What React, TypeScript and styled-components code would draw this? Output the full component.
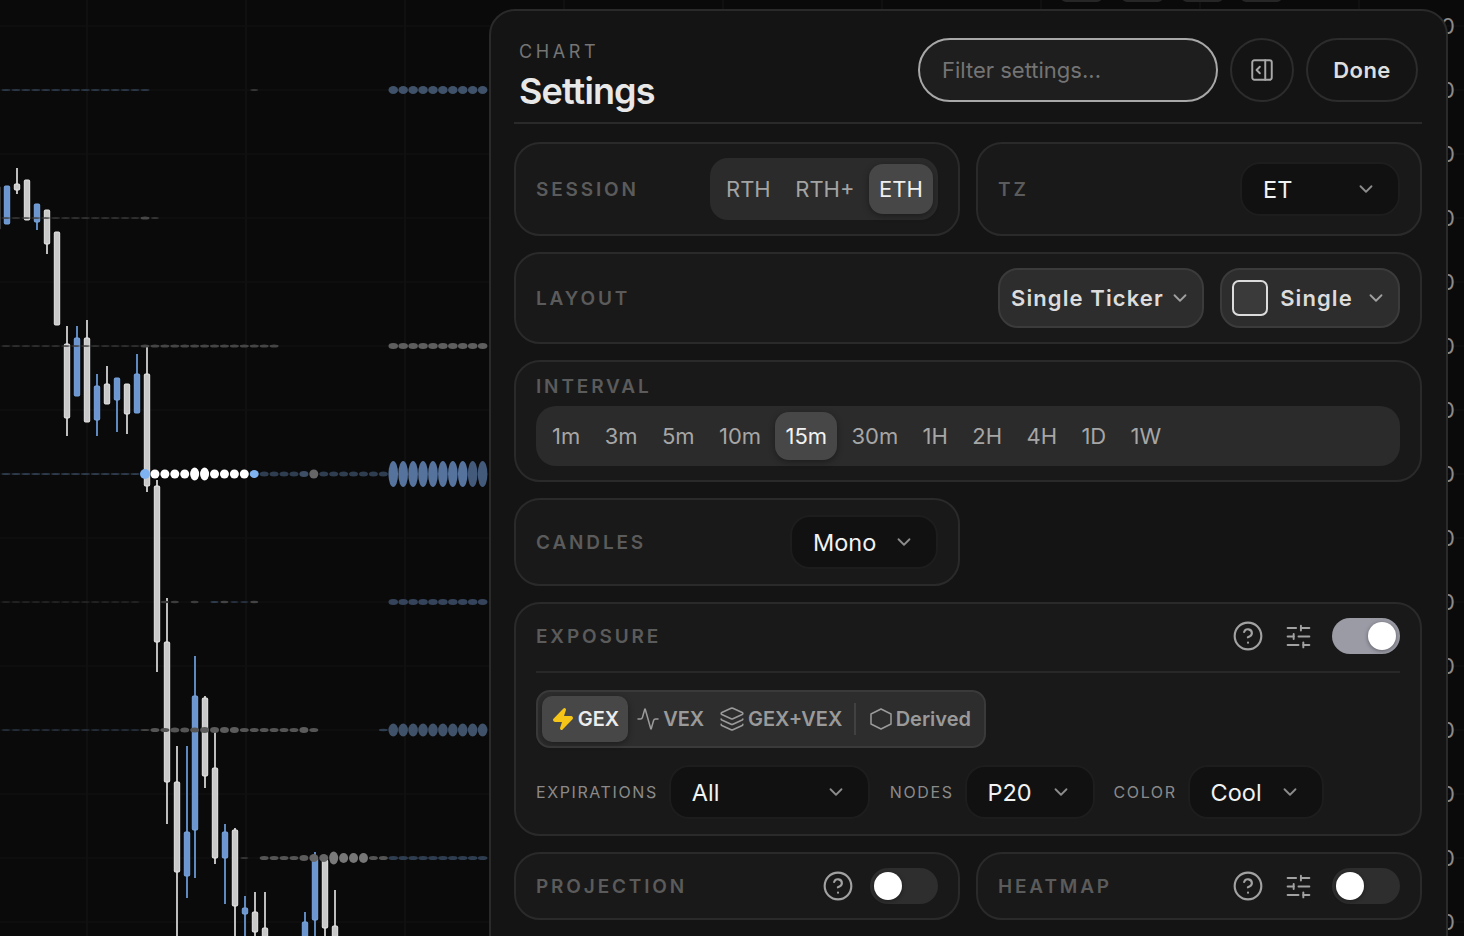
import React from 'react';
import styled, { createGlobalStyle } from 'styled-components';
import { Activity, ChevronDown, CircleHelp, Layers, PanelRightOpen, SlidersHorizontal, Zap } from 'lucide-react';

const GlobalStyle = createGlobalStyle`
  html, body { margin: 0; padding: 0; background: #0a0a0a; }
  body { font-family: Inter, "Noto Sans", "Liberation Sans", sans-serif; -webkit-font-smoothing: antialiased; }
`;

const Page = styled.div`
  position: relative;
  width: 1464px;
  height: 936px;
  overflow: hidden;
  background: #0a0a0a;
`;

const ChartCanvas = styled.svg`
  display: block;
  width: 1464px;
  height: 936px;
`;

const Panel = styled.div`
  position: absolute;
  top: 9px;
  left: 489px;
  width: 959px;
  height: 980px;
  box-sizing: border-box;
  padding: 27px 24px 0 23px;
  display: flex;
  flex-direction: column;
  gap: 16px;
  background: #141414;
  border: 2px solid #2a2a2a;
  border-radius: 26px;
`;

const Header = styled.div`
  display: flex;
  align-items: flex-start;
  padding: 0 4px 20px 5px;
  margin-bottom: 2px;
  border-bottom: 2px solid #2a2a2a;
`;

const TitleBlock = styled.div`
  flex: 1;
  height: 64px;
  display: flex;
  flex-direction: column;
`;

const Eyebrow = styled.div`
  margin-top: 3px;
  font-size: 18px;
  line-height: 22px;
  letter-spacing: 0.2em;
  color: #757575;
`;

const Title = styled.div`
  margin-top: 6px;
  font-size: 36px;
  line-height: 44px;
  font-weight: 600;
  letter-spacing: -0.025em;
  color: #e8e8e8;
`;

const FilterInput = styled.input`
  width: 300px;
  height: 64px;
  box-sizing: border-box;
  padding: 0 22px;
  background: #1e1e1e;
  border: 2px solid #a8a8a8;
  border-radius: 32px;
  outline: none;
  font-family: inherit;
  font-size: 22px;
  color: #ddd;
  &::placeholder { color: #747474; opacity: 1; }
`;

const RoundButton = styled.button`
  height: 64px;
  min-width: 64px;
  margin-left: 12px;
  padding: 0;
  display: flex;
  align-items: center;
  justify-content: center;
  box-sizing: border-box;
  background: transparent;
  border: 2px solid #2c2c2c;
  border-radius: 32px;
  font-family: inherit;
  font-size: 22px;
  font-weight: 600;
  letter-spacing: 0.02em;
  color: #dedede;
`;

const DoneButton = styled(RoundButton)`
  width: 112px;
`;

const TwoColumns = styled.div`
  display: grid;
  grid-template-columns: 446px 446px;
  gap: 16px;
`;

const Card = styled.div`
  box-sizing: border-box;
  background: #191919;
  border: 2px solid #2a2a2a;
  border-radius: 26px;
  padding: 0 20px;
`;

const RowCard = styled(Card)<{ $height: number }>`
  height: ${({ $height }) => $height}px;
  display: flex;
  align-items: center;
  justify-content: space-between;
`;

const CardLabel = styled.div`
  padding-top: 2px;
  font-size: 19px;
  line-height: 24px;
  font-weight: 600;
  letter-spacing: 0.15em;
  color: #5b5b5b;
`;

const Segmented = styled.div`
  display: flex;
  align-items: center;
  gap: 4.5px;
  width: 228px;
  height: 62px;
  box-sizing: border-box;
  padding: 0 5px 0 6px;
  background: #2b2b2b;
  border-radius: 18px;
`;

const SegmentItem = styled.div<{ $active?: boolean }>`
  height: 50px;
  padding: 0 10px;
  display: flex;
  align-items: center;
  border-radius: 14px;
  font-size: 22px;
  color: ${({ $active }) => ($active ? '#f0f0f0' : '#a3a3a3')};
  background: ${({ $active }) => ($active ? '#474747' : 'transparent')};
  box-shadow: ${({ $active }) => ($active ? '0 2px 6px rgba(0,0,0,0.35)' : 'none')};
`;

const DarkSelect = styled.div<{ $width: number }>`
  width: ${({ $width }) => $width}px;
  height: 54px;
  box-sizing: border-box;
  padding: 0 21px;
  display: flex;
  align-items: center;
  justify-content: space-between;
  background: #111111;
  border: 2px solid #1d1d1d;
  border-radius: 20px;
  font-size: 23.5px;
  color: #f2f2f2;
  flex-shrink: 0;
  svg { color: #8c8c8c; }
`;

const LayoutSelects = styled.div`
  display: flex;
  gap: 16px;
`;

const LightSelect = styled.div<{ $width: number }>`
  width: ${({ $width }) => $width}px;
  height: 60px;
  box-sizing: border-box;
  padding: 0 11px;
  display: flex;
  align-items: center;
  justify-content: space-between;
  white-space: nowrap;
  background: #2d2d2d;
  border: 2px solid #3b3b3b;
  border-radius: 20px;
  font-size: 22px;
  font-weight: 600;
  letter-spacing: 0.05em;
  color: #dcdcdc;
  svg { color: #a0a0a0; }
`;

const Swatch = styled.span`
  width: 36px;
  height: 36px;
  margin-left: -1px;
  box-sizing: border-box;
  background: #3a3a3a;
  border: 2px solid #dcdcdc;
  border-radius: 7px;
`;

const IntervalCard = styled(Card)`
  padding-top: 11px;
  padding-bottom: 14px;
  display: flex;
  flex-direction: column;
  gap: 7px;
`;

const IntervalBar = styled.div`
  display: flex;
  align-items: center;
  gap: 4.4px;
  height: 60px;
  padding: 0 6px;
  background: #2b2b2b;
  border-radius: 20px;
`;

const IntervalItem = styled.div<{ $active?: boolean }>`
  height: 48px;
  padding: 0 10px;
  display: flex;
  align-items: center;
  border-radius: 14px;
  font-size: 22px;
  color: ${({ $active }) => ($active ? '#f2f2f2' : '#a6a6a6')};
  background: ${({ $active }) => ($active ? '#474747' : 'transparent')};
  box-shadow: ${({ $active }) => ($active ? '0 2px 6px rgba(0,0,0,0.35)' : 'none')};
`;

const ExposureCard = styled(Card)`
  height: 234px;
  padding-top: 14px;
`;

const ExposureTop = styled.div`
  display: flex;
  align-items: center;
  justify-content: space-between;
  height: 36px;
  padding-bottom: 17px;
  border-bottom: 2px solid #282828;
`;

const Controls = styled.div`
  display: flex;
  align-items: center;
  color: #a2a2a2;
`;

const SlidersSlot = styled.span`
  display: flex;
  margin-left: 20px;
  margin-right: 19px;
`;

const HelpSlot = styled.span<{ $gap?: number }>`
  display: flex;
  margin-right: ${({ $gap }) => $gap ?? 0}px;
`;

const Toggle = styled.div<{ $on?: boolean }>`
  width: 68px;
  height: 36px;
  box-sizing: border-box;
  padding: 4px;
  display: flex;
  justify-content: ${({ $on }) => ($on ? 'flex-end' : 'flex-start')};
  background: ${({ $on }) => ($on ? '#9b9ba6' : '#2e2e2e')};
  border-radius: 18px;
`;

const Knob = styled.span`
  width: 28px;
  height: 28px;
  border-radius: 50%;
  background: #fff;
  box-shadow: 0 1px 4px rgba(0,0,0,0.4);
`;

const ModeGroup = styled.div`
  width: 450px;
  height: 58px;
  box-sizing: border-box;
  margin-top: 17px;
  padding: 0 4px;
  display: flex;
  align-items: center;
  background: #2d2d2d;
  border: 2px solid #3a3a3a;
  border-radius: 14px;
`;

const ModeItem = styled.div<{ $active?: boolean; $width: number }>`
  width: ${({ $width }) => $width}px;
  height: 46px;
  display: flex;
  align-items: center;
  justify-content: center;
  gap: 3px;
  border-radius: 10px;
  font-size: 20px;
  font-weight: 600;
  color: ${({ $active }) => ($active ? '#ececec' : '#9a9a9a')};
  background: ${({ $active }) => ($active ? '#474747' : 'transparent')};
  box-shadow: ${({ $active }) => ($active ? '0 2px 6px rgba(0,0,0,0.35)' : 'none')};
`;

const ModeDivider = styled.span`
  width: 2px;
  height: 32px;
  margin: 0 4px 0 5px;
  background: #414141;
`;

const FieldRow = styled.div`
  display: flex;
  align-items: center;
  margin-top: 17px;
`;

const FieldLabel = styled.div<{ $left?: number }>`
  margin-left: ${({ $left }) => $left ?? 0}px;
  margin-right: 11px;
  font-size: 16px;
  letter-spacing: 0.1em;
  color: #8a8a8a;
`;

const Chevron = () => <ChevronDown size={22} strokeWidth={2} />;

// wider than lucide's hexagon, as in the picture
const HexIcon = () => (
  <svg width={24} height={24} viewBox="0 0 24 24" fill="none" stroke="currentColor" strokeWidth={1.5} strokeLinejoin="round">
    <path d="M12 2 22 7v10l-10 5-10-5V7z" />
  </svg>
);

const sessions = ['RTH', 'RTH+', 'ETH'];
const intervals = ['1m', '3m', '5m', '10m', '15m', '30m', '1H', '2H', '4H', '1D', '1W'];

// x, wick top, body top, body bottom, wick bottom, blue?
const candles: [number, number, number, number, number, boolean][] = [
  [-3, 186, 186, 230, 230, false],
  [7, 186, 186, 224, 224, true],
  [17, 168, 184, 190, 194, false],
  [27, 180, 180, 220, 220, false],
  [37, 204, 204, 222, 230, true],
  [47, 210, 210, 244, 254, false],
  [57, 232, 232, 325, 325, false],
  [67, 326, 344, 418, 436, false],
  [77, 326, 338, 396, 396, true],
  [87, 320, 338, 422, 422, false],
  [97, 374, 386, 420, 436, true],
  [107, 366, 384, 404, 404, false],
  [117, 378, 378, 400, 432, true],
  [127, 384, 384, 414, 434, false],
  [137, 354, 374, 413, 413, true],
  [147, 346, 374, 486, 492, false],
  [157, 480, 486, 642, 672, false],
  [167, 598, 642, 782, 824, false],
  [177, 746, 782, 872, 940, false],
  [187, 746, 832, 876, 898, true],
  [195, 656, 696, 830, 878, true],
  [205, 696, 698, 776, 788, false],
  [215, 732, 768, 858, 864, false],
  [225, 824, 832, 858, 904, true],
  [235, 828, 830, 906, 940, false],
  [245, 896, 908, 914, 940, true],
  [255, 892, 912, 932, 940, false],
  [265, 892, 928, 940, 940, false],
  [305, 912, 922, 940, 940, true],
  [315, 852, 858, 920, 940, true],
  [325, 858, 860, 928, 940, false],
  [335, 890, 926, 940, 940, false],
];

// y, then ranges of dots: first k, last k, rx, ry, colour
type DotRange = [number, number, number, number, string];
const dotRows: [number, DotRange[]][] = [
  [90, [[-14, 0, 4.5, 1, '#2b3746'], [11, 11, 4, 0.8, '#444444'], [25, 34, 4.8, 4, '#3f5269']]],
  [218, [[-14, -1, 4.5, 0.8, '#3d3d3d'], [0, 0, 4.5, 1.5, '#484848'], [1, 1, 4, 0.8, '#444444']]],
  [346, [[-14, -1, 4.5, 0.8, '#3a3a3a'], [0, 13, 4.5, 1.5, '#454545'], [25, 34, 4.8, 3, '#5e5e5e']]],
  [474, [
    [-14, -1, 4.5, 1, '#2e3b4c'], [0, 0, 5, 5, '#7fb2f0'], [1, 4, 4.5, 4.5, '#ffffff'], [5, 6, 4.5, 6.5, '#ffffff'],
    [7, 10, 4.5, 4.5, '#ffffff'], [11, 11, 4.5, 4, '#7fb2f0'], [12, 15, 4.5, 2.5, '#2f3d50'], [16, 16, 4.5, 3, '#3d4f66'],
    [17, 17, 4.5, 4.5, '#666666'], [18, 24, 4.5, 2.5, '#2f3d50'], [25, 32, 4.8, 13, '#55739d'], [33, 34, 4.8, 13, '#445a7a'],
  ]],
  [602, [
    [-14, -1, 4.5, 0.7, '#2a2a2a'], [2, 3, 4, 1.2, '#3d3d3d'], [5, 5, 4, 1.2, '#3d3d3d'], [7, 7, 4, 1, '#2f3d50'],
    [8, 8, 4, 1.2, '#444444'], [9, 10, 4, 0.8, '#2f3d50'], [11, 11, 4, 1.2, '#444444'], [25, 34, 4.8, 3, '#35445a'],
  ]],
  [730, [
    [-14, -1, 4.5, 0.8, '#2b3746'], [0, 0, 4.5, 1, '#444444'], [1, 2, 4.5, 2, '#555555'], [3, 5, 4.5, 2.5, '#555555'],
    [6, 9, 4.5, 3, '#5c5c5c'], [10, 15, 4.5, 2, '#555555'], [16, 16, 4.5, 3, '#5c5c5c'], [17, 17, 4.5, 2, '#555555'],
    [24, 24, 4.5, 1.2, '#2f3d50'], [25, 34, 4.8, 6.5, '#3f5269'],
  ]],
  [858, [
    [10, 10, 4, 0.8, '#444444'], [12, 15, 4.5, 2, '#555555'], [16, 16, 4.5, 3, '#5c5c5c'], [17, 18, 4.5, 4, '#666666'],
    [19, 19, 4.5, 6.5, '#7a7a7a'], [20, 22, 4.5, 5, '#777777'], [23, 24, 4.5, 2, '#555555'], [25, 34, 4.8, 2, '#2f3d50'],
  ]],
];

const dotX = (k: number) => 145 + 9.93 * k;
const gridXs = [87, 246, 405, 564, 723, 882, 1041, 1200, 1359];
const gridYs = Array.from({ length: 15 }, (_, i) => 26 + i * 64);

const Chart = () => (
  <ChartCanvas viewBox="0 0 1464 936">
    {gridXs.map(x => <line key={x} x1={x} x2={x} y1={0} y2={936} stroke="#131313" strokeWidth={1.5} />)}
    {gridYs.map(y => <line key={y} x1={0} x2={1464} y1={y} y2={y} stroke="#111111" strokeWidth={1.5} />)}
    {[1061, 1122, 1182, 1241].map(x => <rect key={x} x={x} y={-10} width={41} height={12} rx={5} fill="#262626" />)}
    {candles.map(([x, wickTop, top, bottom, wickBottom, blue]) => (
      <g key={x}>
        <line x1={x} x2={x} y1={wickTop} y2={wickBottom} stroke={blue ? '#5f88bf' : '#bdbdbd'} strokeWidth={2} />
        <rect x={x - 2.7} y={top} width={5.4} height={bottom - top} rx={1} fill={blue ? '#6b96d0' : '#c9c9c9'} stroke={blue ? '#7ba6e0' : '#e8e8e8'} strokeWidth={1} />
      </g>
    ))}
    {dotRows.map(([y, ranges]) => ranges.flatMap(([from, to, rx, ry, fill]) =>
      Array.from({ length: to - from + 1 }, (_, i) => (
        <ellipse key={`${y}-${from + i}`} cx={dotX(from + i)} cy={y} rx={rx} ry={ry} fill={fill} />
      ))
    ))}
    {gridYs.map(y => <text key={y} x={1441} y={y + 8} fontFamily="Inter, sans-serif" fontSize={22} fill="#8a8a8a">0</text>)}
  </ChartCanvas>
);

const App = () => (
  <Page>
    <GlobalStyle />
    <Chart />
    <Panel>
      <Header>
        <TitleBlock>
          <Eyebrow>CHART</Eyebrow>
          <Title>Settings</Title>
        </TitleBlock>
        <FilterInput placeholder="Filter settings..." readOnly />
        <RoundButton aria-label="Dock panel"><PanelRightOpen size={26} strokeWidth={1.8} color="#a8a8a8" /></RoundButton>
        <DoneButton>Done</DoneButton>
      </Header>

      <TwoColumns>
        <RowCard $height={94}>
          <CardLabel>SESSION</CardLabel>
          <Segmented>
            {sessions.map(s => <SegmentItem key={s} $active={s === 'ETH'}>{s}</SegmentItem>)}
          </Segmented>
        </RowCard>
        <RowCard $height={94}>
          <CardLabel>TZ</CardLabel>
          <DarkSelect $width={160}>ET <Chevron /></DarkSelect>
        </RowCard>
      </TwoColumns>

      <RowCard $height={92}>
        <CardLabel>LAYOUT</CardLabel>
        <LayoutSelects>
          <LightSelect $width={206}>Single Ticker <Chevron /></LightSelect>
          <LightSelect $width={180}><Swatch />Single <Chevron /></LightSelect>
        </LayoutSelects>
      </RowCard>

      <IntervalCard>
        <CardLabel>INTERVAL</CardLabel>
        <IntervalBar>
          {intervals.map(i => <IntervalItem key={i} $active={i === '15m'}>{i}</IntervalItem>)}
        </IntervalBar>
      </IntervalCard>

      <TwoColumns>
        <RowCard $height={88}>
          <CardLabel>CANDLES</CardLabel>
          <DarkSelect $width={148}>Mono <Chevron /></DarkSelect>
        </RowCard>
      </TwoColumns>

      <ExposureCard>
        <ExposureTop>
          <CardLabel>EXPOSURE</CardLabel>
          <Controls>
            <HelpSlot><CircleHelp size={32} strokeWidth={1.6} /></HelpSlot>
            <SlidersSlot><SlidersHorizontal size={29} strokeWidth={1.6} /></SlidersSlot>
            <Toggle $on><Knob /></Toggle>
          </Controls>
        </ExposureTop>
        <ModeGroup>
          <ModeItem $active $width={87}><Zap size={24} fill="#f5c518" color="#f5c518" />GEX</ModeItem>
          <ModeItem $width={86}><Activity size={24} strokeWidth={1.5} />VEX</ModeItem>
          <ModeItem $width={138}><Layers size={26} strokeWidth={1.5} />GEX+VEX</ModeItem>
          <ModeDivider />
          <ModeItem $width={122}><HexIcon />Derived</ModeItem>
        </ModeGroup>
        <FieldRow>
          <FieldLabel>EXPIRATIONS</FieldLabel>
          <DarkSelect $width={201}>All <Chevron /></DarkSelect>
          <FieldLabel $left={20}>NODES</FieldLabel>
          <DarkSelect $width={130}>P20 <Chevron /></DarkSelect>
          <FieldLabel $left={19}>COLOR</FieldLabel>
          <DarkSelect $width={136}>Cool <Chevron /></DarkSelect>
        </FieldRow>
      </ExposureCard>

      <TwoColumns>
        <RowCard $height={68}>
          <CardLabel>PROJECTION</CardLabel>
          <Controls>
            <HelpSlot $gap={16}><CircleHelp size={32} strokeWidth={1.6} /></HelpSlot>
            <Toggle><Knob /></Toggle>
          </Controls>
        </RowCard>
        <RowCard $height={68}>
          <CardLabel>HEATMAP</CardLabel>
          <Controls>
            <HelpSlot><CircleHelp size={32} strokeWidth={1.6} /></HelpSlot>
            <SlidersSlot><SlidersHorizontal size={29} strokeWidth={1.6} /></SlidersSlot>
            <Toggle><Knob /></Toggle>
          </Controls>
        </RowCard>
      </TwoColumns>
    </Panel>
  </Page>
);

export default App;
